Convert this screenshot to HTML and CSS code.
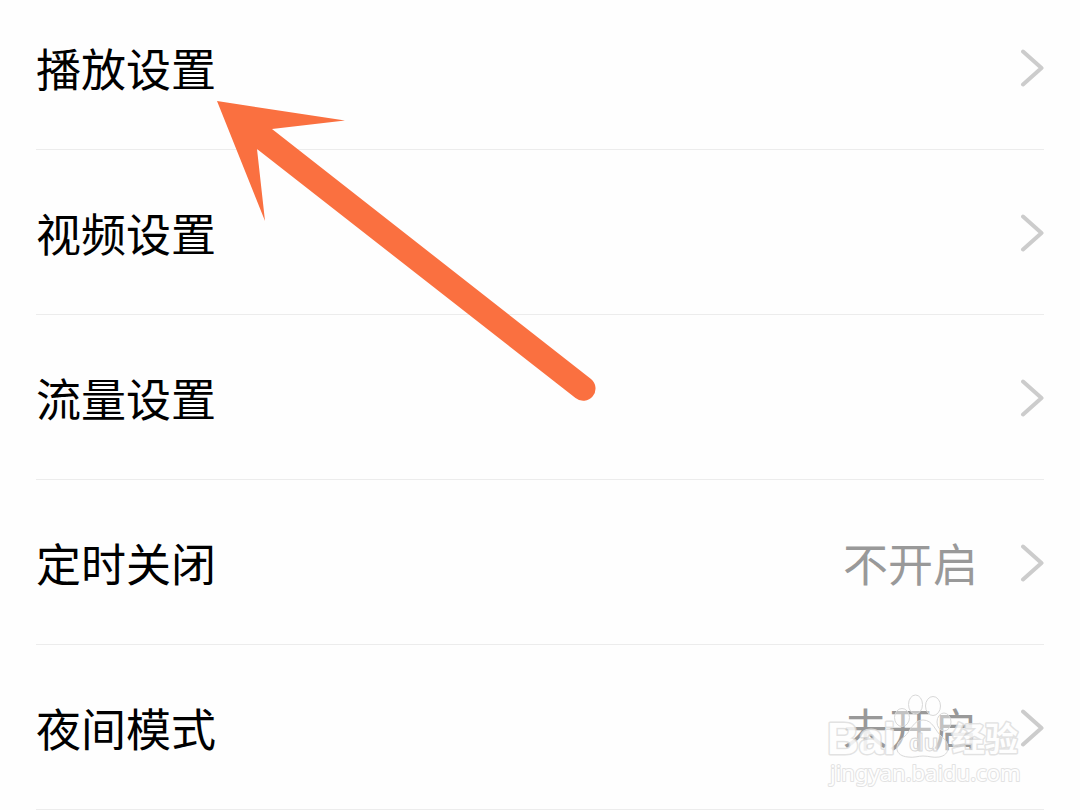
FILE: index.html
```html
<!DOCTYPE html>
<html lang="zh-CN">
<head>
<meta charset="utf-8">
<meta name="viewport" content="width=device-width, initial-scale=1">
<title>设置</title>
<link rel="stylesheet" href="styles.css">
</head>
<body>
<main class="settings">
  <nav class="list">
    <a class="row" href="#playback"><span class="label">播放设置</span><svg class="chevron" viewBox="0 0 24 38" aria-hidden="true"><path d="M3 2.500L21.500 19L3 35.500"/></svg></a>
    <a class="row" href="#video"><span class="label">视频设置</span><svg class="chevron" viewBox="0 0 24 38" aria-hidden="true"><path d="M3 2.500L21.500 19L3 35.500"/></svg></a>
    <a class="row" href="#data"><span class="label">流量设置</span><svg class="chevron" viewBox="0 0 24 38" aria-hidden="true"><path d="M3 2.500L21.500 19L3 35.500"/></svg></a>
    <a class="row" href="#timer"><span class="label">定时关闭</span><span class="value">不开启</span><svg class="chevron" viewBox="0 0 24 38" aria-hidden="true"><path d="M3 2.500L21.500 19L3 35.500"/></svg></a>
    <a class="row" href="#night"><span class="label">夜间模式</span><span class="value">未开启</span><svg class="chevron" viewBox="0 0 24 38" aria-hidden="true"><path d="M3 2.500L21.500 19L3 35.500"/></svg></a>
  </nav>
  <svg class="arrow" viewBox="0 0 380 302" aria-hidden="true">
    <path d="M0 0L128 19.500L55 28L374 278A12.200 12.200 0 0 1 358.500 297L40 48L48 120Z"/>
  </svg>
  <svg class="watermark" viewBox="0 0 204 96" role="img" aria-label="Baidu经验 jingyan.baidu.com">
    <g class="paw">
      <ellipse cx="90.500" cy="10.500" rx="7" ry="9.500"/>
      <ellipse cx="108" cy="12" rx="7.500" ry="9.500"/>
      <ellipse cx="77" cy="23.500" rx="7.500" ry="9"/>
      <ellipse cx="119" cy="28" rx="7" ry="9"/>
      <path d="M98 26C88 26 86 37 79 43C68 51 70 62 83 63C89 64 93 62 98 62C104 62 108 64 114 63C126 61 125 49 117 43C110 37 108 26 98 26Z"/>
    </g>
    <text class="brand" x="2" y="60">Bai</text>
    <text class="du" x="84" y="57">du</text>
    <text class="jingyan" x="127" y="57">经验</text>
    <text class="url" x="5" y="87">jingyan.baidu.com</text>
  </svg>
</main>
</body>
</html>
```
FILE: styles.css
```css
* {
  box-sizing: border-box;
}

body {
  margin: 0;
  background: #fefefe;
  color: #000;
  font-family: "Noto Sans CJK SC", "Noto Sans", sans-serif;
}

.settings {
  position: relative;
}

.list {
  padding: 0 36px;
}

.row {
  display: flex;
  align-items: center;
  padding: 50px 0 48px;
  border-bottom: 1px solid #ececec;
  color: inherit;
  font-size: 45px;
  line-height: 66px;
  text-decoration: none;
}

.row:first-child {
  padding-top: 35px;
}

.label {
  flex: 1;
}

.value {
  margin-right: 42px;
  color: #999;
}

.chevron {
  width: 24px;
  height: 38px;
  fill: none;
  stroke: #ccc;
  stroke-width: 4;
  stroke-linecap: round;
  stroke-linejoin: round;
}

.arrow {
  position: absolute;
  top: 101px;
  left: 217px;
  width: 380px;
  height: 302px;
  fill: #fa7040;
}

.watermark {
  position: absolute;
  right: 51px;
  bottom: 20px;
  width: 204px;
  height: 96px;
  fill: rgba(255, 255, 255, 0.4);
  stroke: #d8d8d8;
  stroke-width: 1;
  stroke-linejoin: round;
  pointer-events: none;
}

.brand,
.du {
  font-family: "Liberation Sans", Arial, sans-serif;
  font-weight: 700;
}

.brand,
.jingyan,
.url {
  fill: #fff;
  stroke: #dedede;
  stroke-width: 3;
  paint-order: stroke;
  opacity: 0.85;
}

.brand {
  font-size: 44px;
}

.du {
  font-size: 24px;
}

.jingyan {
  font-size: 33px;
  font-weight: 700;
}

.url {
  font-family: "Noto Sans", sans-serif;
  font-size: 22px;
  stroke-width: 2;
}
```
